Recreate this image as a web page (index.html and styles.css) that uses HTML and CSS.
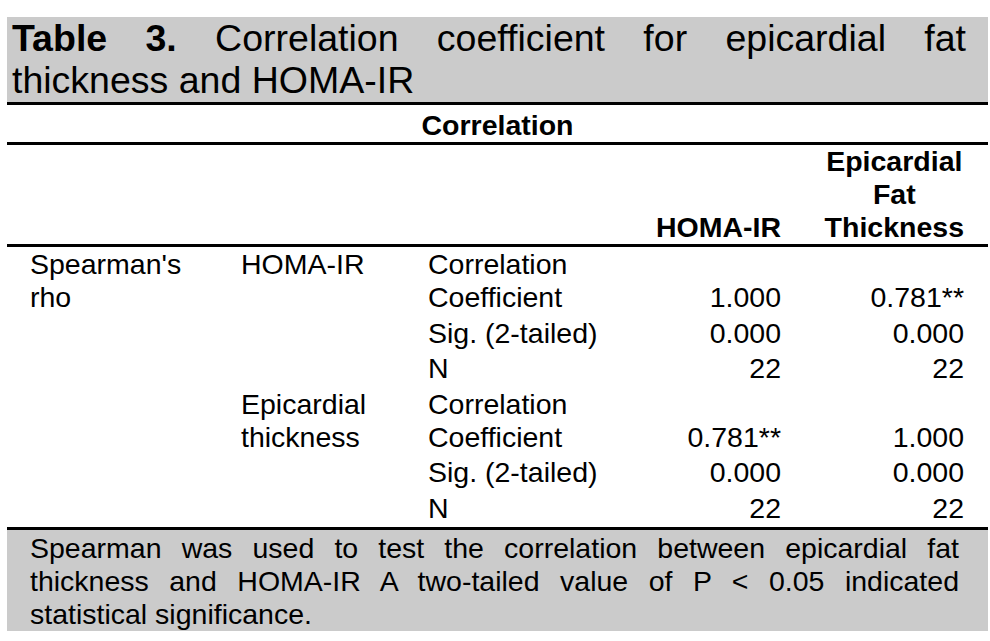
FILE: index.html
```html
<!DOCTYPE html>
<html lang="en">
<head>
<meta charset="utf-8">
<title>Table 3</title>
<link rel="stylesheet" href="styles.css">
</head>
<body>
<div class="page">
  <div class="title">
    <span class="line"><b>Table 3.</b> Correlation coefficient for epicardial fat</span>
    <span class="line last">thickness and HOMA-IR</span>
  </div>
  <table class="corr">
    <colgroup>
      <col class="c1"><col class="c2"><col class="c3"><col class="c4"><col class="c5">
    </colgroup>
    <thead>
      <tr class="cap"><th colspan="5">Correlation</th></tr>
      <tr class="heads">
        <th></th><th></th><th></th>
        <th class="num">HOMA-IR</th>
        <th class="num last"><span class="stack">Epicardial<br>Fat<br>Thickness</span></th>
      </tr>
    </thead>
    <tbody>
      <tr>
        <td rowspan="6" class="first">Spearman's rho</td>
        <td rowspan="3" class="group">HOMA-IR</td>
        <td class="stat">Correlation Coefficient</td>
        <td class="num">1.000</td>
        <td class="num last">0.781**</td>
      </tr>
      <tr><td class="stat">Sig. (2-tailed)</td><td class="num">0.000</td><td class="num last">0.000</td></tr>
      <tr><td class="stat">N</td><td class="num">22</td><td class="num last">22</td></tr>
      <tr>
        <td rowspan="3" class="group">Epicardial thickness</td>
        <td class="stat">Correlation Coefficient</td>
        <td class="num">0.781**</td>
        <td class="num last">1.000</td>
      </tr>
      <tr><td class="stat">Sig. (2-tailed)</td><td class="num">0.000</td><td class="num last">0.000</td></tr>
      <tr><td class="stat">N</td><td class="num">22</td><td class="num last">22</td></tr>
    </tbody>
  </table>
  <div class="note">
    <span class="line">Spearman was used to test the correlation between epicardial fat</span>
    <span class="line">thickness and HOMA-IR A two-tailed value of P &lt; 0.05 indicated</span>
    <span class="line last">statistical significance.</span>
  </div>
</div>
</body>
</html>
```

FILE: styles.css
```css
html, body {
  margin: 0;
  padding: 0;
  background: #ffffff;
}

body {
  font-family: "Liberation Sans", Arial, sans-serif;
  color: #000000;
}

.page {
  width: 981px;
  padding: 17px 0 0 7px;
}

.line {
  display: block;
  text-align: justify;
  text-align-last: justify;
}

.line.last {
  text-align-last: left;
}

.title {
  background: #cbcbcb;
  font-size: 37.5px;
  line-height: 42px;
  padding: 0 22px 1px 5px;
  width: 954px;
}

.corr {
  width: 981px;
  border-collapse: collapse;
  table-layout: fixed;
  font-size: 28.5px;
  line-height: 33px;
}

.c1 { width: 218px; }
.c2 { width: 188px; }
.c3 { width: 197px; }
.c4 { width: 187px; }
.c5 { width: 191px; }

.corr th,
.corr td {
  padding: 1px 0 1.5px 0;
  text-align: left;
  vertical-align: top;
}

.corr th {
  font-weight: bold;
}

.corr .cap th {
  border-top: 3px solid #000;
  border-bottom: 3px solid #000;
  text-align: center;
  padding: 4px 0 0 0;
}

.corr .heads th {
  vertical-align: bottom;
  padding: 0;
  border-bottom: 3px solid #000;
}

.corr td.first {
  padding-left: 23px;
  padding-right: 10px;
}

.corr td.group {
  padding-left: 16px;
  padding-right: 8px;
}

.corr td.stat {
  padding-left: 15px;
}

.corr .num,
.corr .heads th.num {
  text-align: right;
  padding-right: 16px;
}

.corr td.num {
  vertical-align: bottom;
}

.corr td.num.last,
.corr .heads th.num.last {
  padding-right: 24px;
}

.stack {
  display: inline-block;
  text-align: center;
}

.corr tbody tr:last-child td {
  padding-bottom: 2px;
}

.note {
  background: #cbcbcb;
  border-top: 3px solid #000;
  font-size: 28.5px;
  line-height: 33px;
  padding: 2px 29px 0 23px;
  width: 929px;
}
```
